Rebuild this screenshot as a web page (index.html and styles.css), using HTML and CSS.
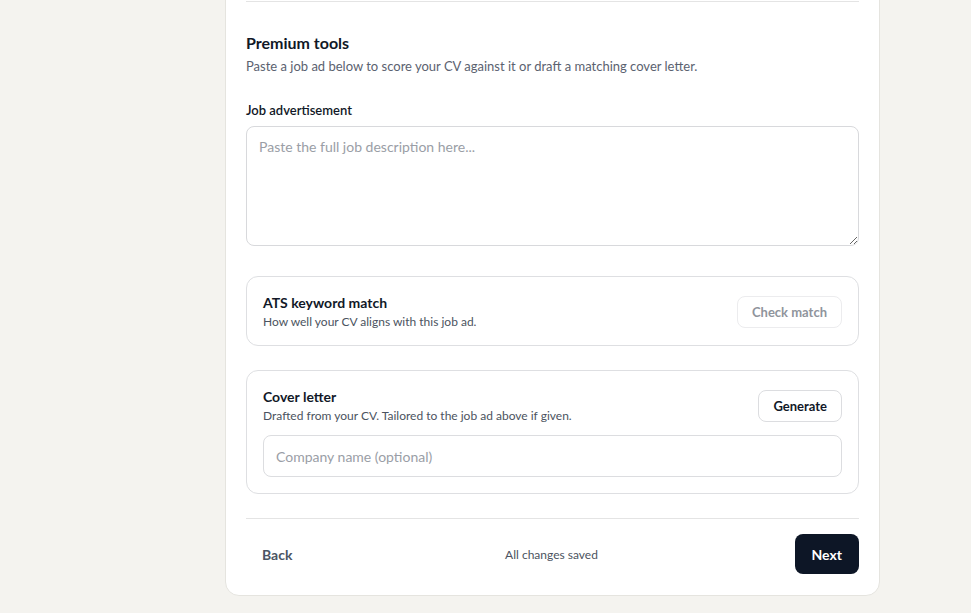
FILE: index.html
```html
<!DOCTYPE html>
<html lang="en">
<head>
    <meta charset="UTF-8">
    <meta name="viewport" content="width=device-width, initial-scale=1.0">
    <title>CV Builder - Premium tools</title>
    <link rel="stylesheet" href="styles.css">
</head>
<body>
    <div class="page">
        <div class="card">
            <hr class="divider">

            <section class="premium">
                <h2>Premium tools</h2>
                <p class="lead">Paste a job ad below to score your CV against it or draft a matching cover letter.</p>

                <label class="field-label" for="jobAd">Job advertisement</label>
                <textarea id="jobAd" placeholder="Paste the full job description here..."></textarea>

                <!-- ATS check -->
                <div class="tool tool-ats">
                    <div class="tool-head">
                        <div>
                            <h3>ATS keyword match</h3>
                            <p>How well your CV aligns with this job ad.</p>
                        </div>
                        <button class="btn-outline" disabled>Check match</button>
                    </div>
                </div>

                <!-- Cover letter -->
                <div class="tool">
                    <div class="tool-head">
                        <div>
                            <h3>Cover letter</h3>
                            <p>Drafted from your CV. Tailored to the job ad above if given.</p>
                        </div>
                        <button class="btn-outline">Generate</button>
                    </div>
                    <input type="text" class="company" placeholder="Company name (optional)">
                </div>
            </section>

            <div class="footer">
                <button class="btn-back">Back</button>
                <span class="saved">All changes saved</span>
                <button class="btn-next">Next</button>
            </div>
        </div>
    </div>
</body>
</html>
```

FILE: styles.css
```css
/* Page */
html, body {
    margin: 0;
    height: 100%;
    background: #f4f3ef;
    font-family: Lato, "Noto Sans", Arial, sans-serif;
    color: #111827;
}

.page {
    padding-left: 225px;
    overflow: hidden;
}

.card {
    width: 613px;
    margin-top: -22px;
    padding: 22px 20px 21px;
    background: white;
    border: 1px solid #e5e4df;
    border-radius: 0 0 14px 14px;
}

.divider {
    margin: 0;
    border: none;
    border-top: 1px solid #e4e4e4;
}

.premium {
    padding-top: 31px;
}

h2 {
    margin: 0;
    font-size: 16px;
    font-weight: 700;
    line-height: 20px;
}

.lead {
    margin: 3px 0 0;
    font-size: 13px;
    line-height: 20px;
    color: #5b6270;
}

.field-label {
    display: block;
    margin-top: 24px;
    font-size: 13px;
    font-weight: 600;
    line-height: 20px;
}

textarea {
    display: block;
    box-sizing: border-box;
    width: 100%;
    height: 120px;
    margin-top: 6px;
    padding: 11px 12px;
    font-family: inherit;
    font-size: 14px;
    border: 1px solid #d8d9dc;
    border-radius: 8px;
    resize: vertical;
}

textarea::placeholder,
.company::placeholder {
    color: #9a9ea6;
}

.tool {
    margin-top: 24px;
    padding: 17px 16px 16px;
    border: 1px solid #dedfe2;
    border-radius: 12px;
}

.tool-ats {
    margin-top: 30px;
    padding-bottom: 15px;
}

.tool-head {
    display: flex;
    justify-content: space-between;
    align-items: center;
}

.tool h3 {
    margin: 0;
    font-size: 14px;
    font-weight: 700;
    line-height: 18px;
}

.tool p {
    margin: 1px 0 0;
    font-size: 12px;
    line-height: 17px;
    color: #4b5360;
}

.btn-outline {
    height: 32px;
    padding: 0 14px;
    font-family: inherit;
    font-size: 13px;
    font-weight: 700;
    color: #111827;
    background: white;
    border: 1px solid #dcdde0;
    border-radius: 8px;
    cursor: pointer;
}

.btn-outline:disabled {
    color: #8f949c;
    border-color: #ececee;
    cursor: default;
}

.company {
    display: block;
    box-sizing: border-box;
    width: 100%;
    height: 42px;
    margin-top: 11px;
    padding: 0 12px;
    font-family: inherit;
    font-size: 14px;
    border: 1px solid #dcdde0;
    border-radius: 8px;
}

.footer {
    display: flex;
    justify-content: space-between;
    align-items: center;
    margin-top: 24px;
    padding-top: 15px;
    border-top: 1px solid #e4e4e4;
}

.btn-back {
    padding: 10px 16px;
    font-family: inherit;
    font-size: 14px;
    font-weight: 700;
    color: #4b5563;
    background: none;
    border: none;
    cursor: pointer;
}

.saved {
    font-size: 12px;
    color: #4b5360;
}

.btn-next {
    height: 40px;
    padding: 0 17px;
    font-family: inherit;
    font-size: 14px;
    font-weight: 700;
    color: white;
    background: #0d1626;
    border: none;
    border-radius: 8px;
    cursor: pointer;
}
```
